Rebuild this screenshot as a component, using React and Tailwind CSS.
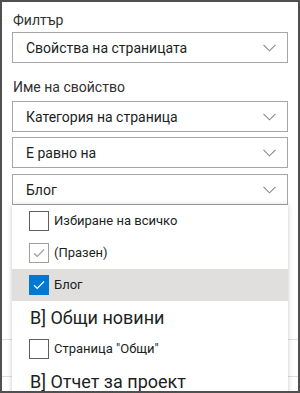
import React from 'react';

const font = { fontFamily: 'Roboto, "Noto Sans", sans-serif' };

function Chevron() {
  return (
    <svg width="13" height="8" viewBox="0 0 13 8" className="shrink-0">
      <path d="M0.5 0.8 L6.5 6.8 L12.5 0.8" fill="none" stroke="#8a8886" strokeWidth="1.1" />
    </svg>
  );
}

function Dropdown({ value, className = '' }) {
  return (
    <div className={`flex items-center justify-between h-[31px] border border-[#a6a6a6] pl-[13px] pr-[11px] ${className}`}>
      <span className="text-[14px] text-[#201f1e] leading-none">{value}</span>
      <Chevron />
    </div>
  );
}

function Box({ state }) {
  if (state === 'checked') {
    return (
      <span className="w-[20px] h-[20px] bg-[#0078d4] flex items-center justify-center shrink-0">
        <svg width="12" height="10" viewBox="0 0 12 10">
          <path d="M1 5.2 L4.2 8.3 L11 1.5" fill="none" stroke="#fff" strokeWidth="1.2" />
        </svg>
      </span>
    );
  }
  if (state === 'disabled') {
    return (
      <span className="w-[20px] h-[20px] border border-[#a19f9d] flex items-center justify-center shrink-0">
        <svg width="12" height="10" viewBox="0 0 12 10">
          <path d="M1 5.2 L4.2 8.3 L11 1.5" fill="none" stroke="#a19f9d" strokeWidth="1.2" />
        </svg>
      </span>
    );
  }
  return <span className="w-[20px] h-[20px] border border-[#605e5c] shrink-0" />;
}

function Option({ label, state, selected }) {
  return (
    <div className={`flex items-center h-[32px] pl-[17px] gap-[5px] ${selected ? 'bg-[#e1dfdd]' : ''}`}>
      <Box state={state} />
      <span className="text-[13px] text-[#201f1e]">{label}</span>
    </div>
  );
}

function Header({ label }) {
  return (
    <div className="flex items-center h-[32px] pl-[18px]">
      <span className="text-[18px] text-[#201f1e]">{label}</span>
    </div>
  );
}

export default function App() {
  return (
    <div style={font} className="w-[300px] h-[393px] border-2 border-[#505050] bg-white overflow-hidden">
      <div className="px-[10px] pt-[8px]">
        <div className="text-[14px] text-[#323130] h-[22px] leading-[20px] pl-[1px]">Филтър</div>
        <Dropdown value="Свойства на страницата" />
        <div className="text-[14px] text-[#323130] h-[22px] leading-[20px] mt-[14px] pl-[1px]">Име на свойство</div>
        <Dropdown value="Категория на страница" className="mt-[2px]" />
        <Dropdown value="Е равно на" className="mt-[5px]" />
        <Dropdown value="Блог" className="mt-[6px]" />

        <div className="relative">
          {/* fields hidden under the open menu */}
          <div className="-mx-[10px]">
            <div className="h-[135px] border-b border-[#e1dfdd]" />
            <div className="h-[37px] border-b border-[#e1dfdd]" />
          </div>

          <div className="absolute left-0 right-0 top-0 bg-white shadow-[0_0_5px_rgba(0,0,0,0.22)]">
            <Option label="Избиране на всичко" />
            <Option label="(Празен)" state="disabled" />
            <Option label="Блог" state="checked" selected />
            <Header label="В] Общи новини" />
            <Option label={'Страница "Общи"'} />
            <Header label="В] Отчет за проект" />
          </div>
        </div>
      </div>
    </div>
  );
}
